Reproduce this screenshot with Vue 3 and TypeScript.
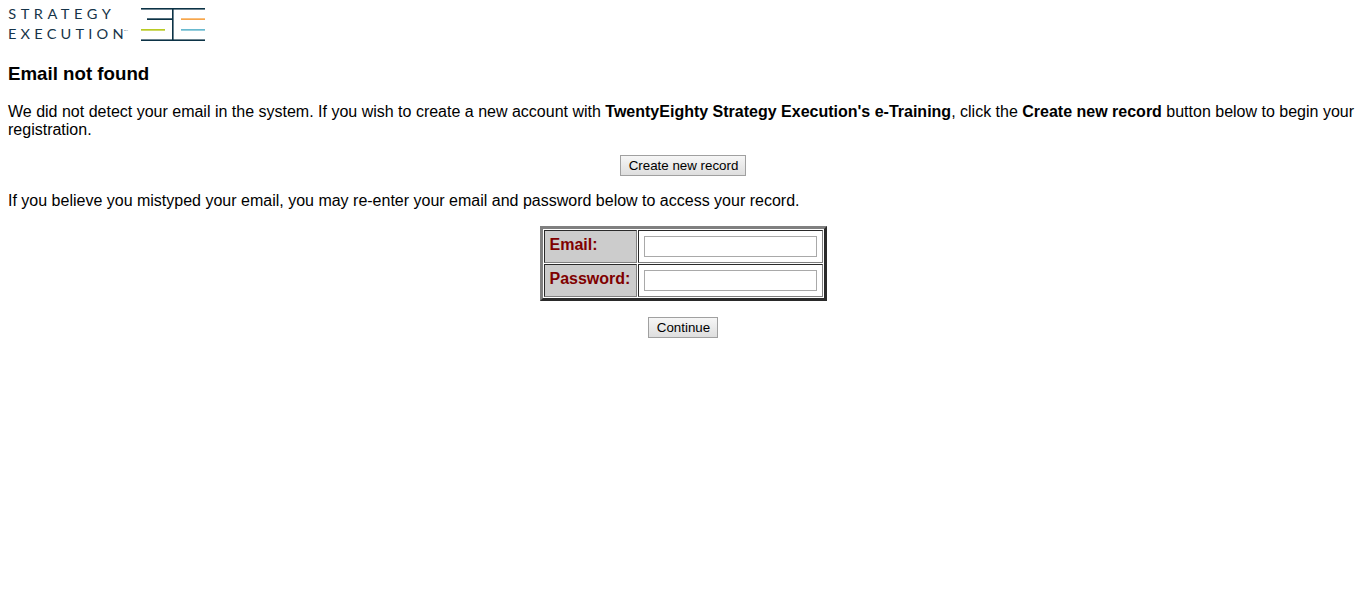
<script setup lang="ts">
import { ref } from 'vue'

const email = ref('')
const password = ref('')
</script>

<template>
  <main class="page">
    <svg class="logo" width="198" height="34" viewBox="8 8 198 34" role="img" aria-label="Strategy Execution">
      <g class="word">
        <text transform="translate(8.2 19.3) scale(1.08 1)" textLength="95">STRATEGY</text>
        <text transform="translate(8 39.3) scale(1.08 1)" textLength="107">EXECUTION</text>
        <text class="tm" x="124" y="31">TM</text>
      </g>
      <g fill="#0c3346">
        <rect x="141" y="8" width="64" height="1.6" />
        <rect x="147" y="18.3" width="25" height="1.7" />
        <rect x="141" y="39.4" width="64" height="1.6" />
        <rect x="172" y="8" width="1.6" height="33" />
      </g>
      <rect x="181" y="18.3" width="24" height="1.7" fill="#f7a64b" />
      <rect x="141" y="29" width="24" height="1.7" fill="#b9ca24" />
      <rect x="181" y="29" width="24" height="1.7" fill="#68b9cf" />
    </svg>

    <h3>Email not found</h3>
    <p>
      We did not detect your email in the system. If you wish to create a new account with
      <b class="product">TwentyEighty Strategy Execution's e-Training</b>, click the <b>Create new record</b> button below
      to begin your registration.
    </p>
    <div class="actions"><button type="button" class="create">Create new record</button></div>
    <p class="retry">
      If you believe you mistyped your email, you may re-enter your email and password below to access your record.
    </p>
    <form @submit.prevent>
      <table>
        <tbody>
          <tr>
            <th><label for="email">Email:</label></th>
            <td><input id="email" v-model="email" type="text" /></td>
          </tr>
          <tr>
            <th><label for="password">Password:</label></th>
            <td><input id="password" v-model="password" type="password" /></td>
          </tr>
        </tbody>
      </table>
      <div class="actions"><button type="submit" class="continue">Continue</button></div>
    </form>
  </main>
</template>

<style scoped>
.page {
  padding: 8px;
  font: 16px/18px "Liberation Sans", Arial, sans-serif;
  color: #000;
}
.logo {
  display: block;
  overflow: visible;
}
.word {
  font-family: Lato, sans-serif;
  font-size: 13.5px;
  fill: #163449;
}
.tm {
  font-size: 2.5px;
}
h3 {
  margin: 21px 0 18px;
  font-size: 18.72px;
  line-height: 22px;
}
p {
  margin: 0 0 16px;
}
.actions {
  display: flex;
  justify-content: center;
}
button {
  box-sizing: border-box;
  height: 21px;
  padding: 0 0 0 1px;
  border: 1px solid #a0a0a0;
  border-radius: 0;
  background: linear-gradient(#f6f6f6, #dedede);
  font: 13.333px/15px "Liberation Sans", Arial, sans-serif;
  color: #000;
}
.create {
  width: 126px;
}
.continue {
  width: 70px;
}
.retry {
  margin-top: 16px;
}
table {
  width: 287px;
  margin: 0 auto 16px;
  border: 3px solid;
  border-color: #808080 #2a2a2a #2a2a2a #808080;
  border-collapse: separate;
  border-spacing: 1px;
  table-layout: fixed;
}
th,
td {
  box-sizing: border-box;
  height: 33px;
  padding: 5px;
  border: 1px solid;
  border-color: #2a2a2a #808080 #808080 #2a2a2a;
  vertical-align: top;
}
th {
  width: 93px;
  padding: 5px 4px 5px 5px;
  background: #ccc;
  color: #800000;
  text-align: left;
  white-space: nowrap;
}
input {
  display: block;
  box-sizing: border-box;
  width: 173px;
  height: 21px;
  margin: 0;
  padding: 1px;
  border: 1px solid #a9a9a9;
  background: #fff;
  font: 13.333px "Liberation Sans", Arial, sans-serif;
}
</style>
<style>
body {
  background: #fff;
}
</style>
